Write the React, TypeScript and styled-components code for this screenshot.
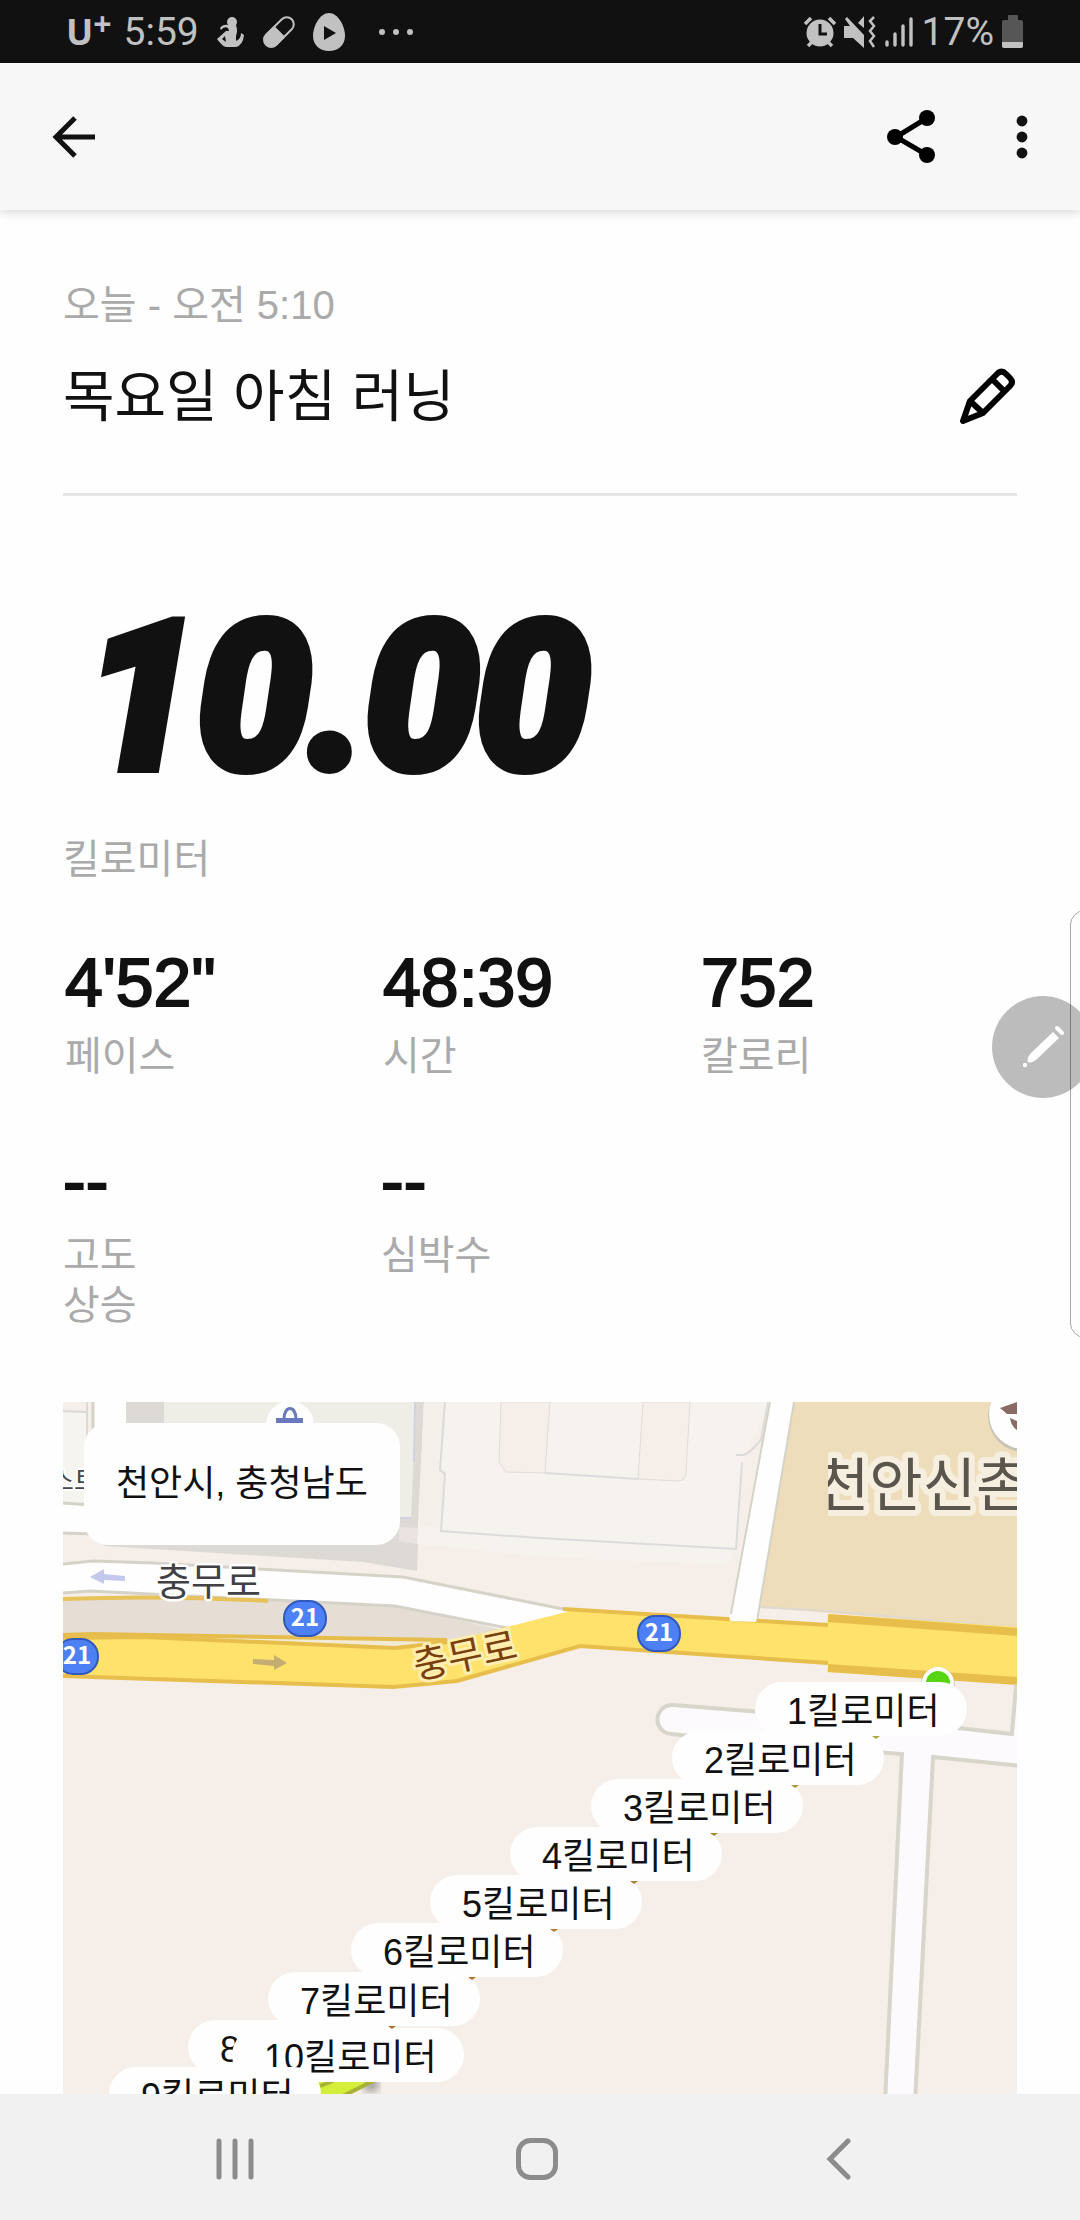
import React from "react";
import styled, { createGlobalStyle } from "styled-components";

const sans = `"Liberation Sans", "Noto Sans CJK KR", sans-serif`;
const korean = `"Noto Sans CJK KR", sans-serif`;
const ink = "#111111";
const muted = "#aaaaaa";

const GlobalStyle = createGlobalStyle`
  *, *::before, *::after { box-sizing: border-box; }
  body { margin: 0; background: #fefefe; color: ${ink}; font-family: ${sans}; }
  h1, p, dl, dt, dd { margin: 0; font-weight: 400; }
  button { margin: 0; padding: 0; border: 0; background: none; color: inherit; cursor: pointer; }
  svg { display: block; }
`;

const Screen = styled.div`
  position: relative;
  display: flex;
  flex-direction: column;
  height: 100vh;
  overflow: hidden;
`;

const StatusBar = styled.div`
  display: flex;
  flex: none;
  align-items: center;
  justify-content: space-between;
  height: 63px;
  padding: 0 56px 0 66px;
  background: #111111;
  color: #c1c1c1;
`;

const StatusGroup = styled.div<{ $gap: number }>`
  display: flex;
  align-items: center;
  gap: ${(p) => p.$gap}px;
`;

const StatusText = styled.span`
  font: 400 39px/64px Roboto, sans-serif;
`;

const Carrier = styled.span`
  display: flex;
  align-items: center;
  font: 700 36px/40px "Noto Sans", sans-serif;

  sup {
    align-self: flex-start;
    font-size: 32px;
    line-height: 24px;
  }
`;

const AppBar = styled.header`
  position: relative;
  z-index: 1;
  display: flex;
  flex: none;
  align-items: center;
  justify-content: space-between;
  height: 147px;
  padding: 0 32px 0 48px;
  background: #f7f7f7;
  box-shadow: 0 2px 10px rgba(0, 0, 0, 0.16);
`;

const AppActions = styled.div`
  display: flex;
  align-items: center;
  gap: 60px;
`;

const IconButton = styled.button`
  display: grid;
  place-items: center;
`;

const Content = styled.main`
  display: flex;
  flex: 1;
  flex-direction: column;
  min-height: 0;
  padding: 70px 63px 0;
`;

const RunDate = styled.p`
  color: ${muted};
  font-size: 40px;
  line-height: 50px;
`;

const TitleRow = styled.div`
  display: flex;
  align-items: center;
  justify-content: space-between;
  margin-top: 26px;
  padding-bottom: 55px;
  border-bottom: 3px solid #e5e5e5;
`;

const Title = styled.h1`
  font-size: 56px;
  line-height: 82px;
`;

const Distance = styled.p`
  margin-top: 102px;
  padding-left: 24px;
  font: italic 700 200px/200px Roboto, sans-serif;
  -webkit-text-stroke: 14px ${ink};
`;

const Label = styled.dt`
  color: ${muted};
  font-size: 40px;
  line-height: 50px;
`;

const DistanceLabel = styled(Label).attrs({ as: "p" })`
  margin-top: 36px;
`;

const Stats = styled.dl`
  display: grid;
  grid-template-columns: repeat(3, 1fr);
  row-gap: 60px;
  margin-top: 58px;
`;

const Stat = styled.div`
  display: flex;
  flex-direction: column-reverse;
  justify-content: flex-end;
  gap: 9px;

  &:nth-child(-n + 3) {
    padding-left: 2px;
  }
`;

const StatValue = styled.dd`
  font-size: 68px;
  line-height: 80px;
  -webkit-text-stroke: 2px ${ink};
`;

const MapView = styled.section`
  position: relative;
  flex: 1;
  min-height: 0;
  margin-top: 72px;
  overflow: hidden;
  background: #f6eee8;
`;

const MapLayer = styled.svg`
  position: absolute;
  top: 0;
  left: 0;
`;

const Place = styled.div`
  position: absolute;
  top: 21px;
  left: 21px;
  padding: 0 32px;
  border-radius: 24px;
  background: #fefefe;
  font-size: 36px;
  line-height: 122px;
  white-space: nowrap;
`;

const Pin = styled.div<{ $x: number; $y: number }>`
  position: absolute;
  top: ${(p) => p.$y}px;
  left: ${(p) => p.$x}px;
  padding: 6px 27px 0 32px;
  border-radius: 27px;
  background: #fefefe;
  font-size: 36px;
  line-height: 48px;
  white-space: nowrap;
`;

const EdgePanel = styled.div`
  position: absolute;
  top: 910px;
  right: -20px;
  width: 30px;
  height: 428px;
  border: 1px solid #a8a8a8;
  border-radius: 18px;
`;

const FloatingPen = styled.button`
  position: absolute;
  top: 996px;
  right: -14px;
  display: grid;
  place-items: center;
  width: 102px;
  height: 102px;
  border-radius: 50%;
  background: rgba(0, 0, 0, 0.26);
`;

const NavBar = styled.nav`
  display: grid;
  flex: none;
  grid-template-columns: repeat(3, 1fr);
  height: 126px;
  padding: 4px 90px 0 84px;
  background: #f1f1f1;
  color: #8c8c8c;
`;

const stats = [
  { value: `4'52"`, label: ["페이스"] },
  { value: "48:39", label: ["시간"] },
  { value: "752", label: ["칼로리"] },
  { value: "--", label: ["고도", "상승"] },
  { value: "--", label: ["심박수"] },
];

const pins = [
  { km: 1, x: 692, y: 280 },
  { km: 2, x: 609, y: 329 },
  { km: 3, x: 528, y: 377 },
  { km: 4, x: 447, y: 425 },
  { km: 5, x: 367, y: 473 },
  { km: 6, x: 288, y: 521 },
  { km: 7, x: 205, y: 570 },
  { km: 8, x: 125, y: 618 },
  { km: 10, x: 169, y: 626 },
  { km: 9, x: 46, y: 665 },
];

const tails = [
  [813, 334, "#a9a93c"],
  [732, 383, "#a39a35"],
  [651, 431, "#a38a35"],
  [571, 479, "#a88035"],
  [491, 527, "#b07a30"],
  [409, 575, "#b0702a"],
  [329, 624, "#b0702a"],
] as const;

function Shield({ x, y }: { x: number; y: number }) {
  return (
    <g>
      <rect x={x - 21} y={y - 17} width="42" height="35" rx="17" fill="#4e80f5" stroke="#3159bd" strokeWidth="2" />
      <text x={x} y={y + 8} fill="#fff" fontFamily={korean} fontWeight="700" fontSize="24" textAnchor="middle">21</text>
    </g>
  );
}

function StreetMap() {
  return (
    <MapLayer width="954" height="692" viewBox="0 0 954 692" role="img" aria-label="지도">
      <defs>
        <clipPath id="east-tile"><rect x="765" y="0" width="189" height="692" /></clipPath>
        <filter id="soft"><feGaussianBlur stdDeviation="4" /></filter>
      </defs>
      <path d="M0 9L24 10V102H0Z" fill="#f6f4ef" />
      <path d="M0 9L24 10M24 0V60" fill="none" stroke="#dcdad6" strokeWidth="2" />
      <path d="M63 0H361L354 169L300 160L41 144Z" fill="#dddad5" />
      <path d="M101 0H353L348 116L101 110Z" fill="#efeee6" />
      <path d="M348 116H337M352 0L351 60" stroke="#cfd2df" strokeWidth="2" />
      <path d="M336 125L354 126V142L336 139Z" fill="#ebe3e2" />
      <path d="M361 0H707L668 163L477 155L354 142Z" fill="#f6f3ee" />
      <path d="M361 0H382L377 68L382 72L378 128L356 122Z" fill="#f5efea" />
      <path d="M707 0L668 213L664 163L675 147L680 58Z" fill="#f6eee8" />
      <path d="M438 0L436 60L443 70L482 71L487 0ZM580 0L575 77L616 79Q623 78 623 71L627 0Z" fill="#f6eee8" stroke="#dfdcda" strokeWidth="1" />
      <path d="M382 0L377 68L382 72L378 129L477 136L673 147L679 60M482 71L575 77M673 53H680Q686 52 698 38L705 0" fill="none" stroke="#dcdbdc" strokeWidth="2" />
      <path d="M0 102L30 104V0H63V131H0Z" fill="#fefefe" />
      <path d="M0 101L28 103M30 0V104M0 131L60 133" fill="none" stroke="#d5d3c8" strokeWidth="3" />
      <path d="M731 0H954V227L695 205Z" fill="#eeddbb" />
      <path d="M696 205L765 209L954 226" fill="none" stroke="#dfd9d0" strokeWidth="2" />
      <path d="M707 0H731L693 225H666Z" fill="#fefefe" />
      <path d="M707 0L667 217M731 0L694 219" stroke="#d5d3c8" strokeWidth="2" />
      <path d="M0 197H220L332 204L450 226L400 242L0 240Z" fill="#e6ddd5" />
      <path d="M0 162L30 159L90 161L340 175L503 208L530 222L450 230L332 204L27 189L0 191Z" fill="#fefefe" />
      <path d="M0 162L30 159L90 161L340 175L505 208M444 226L332 204L27 189L0 191" fill="none" stroke="#d5d3c8" strokeWidth="3" />
      <path d="M0 197Q100 193 205 199" fill="none" stroke="#e7c15a" strokeWidth="4" />
      <path d="M0 233L30 232L384 238L332 246Z" fill="#f3ead6" />
      <path d="M0 233L30 232L384 238" fill="none" stroke="#e6bd4c" strokeWidth="4" />
      <path d="M0 236L80 235L332 246L385 240L511 208L765 223V261L517 244L394 279L330 285L0 274Z" fill="#ffe26c" />
      <path d="M0 236L80 235L332 246L385 240M500 207L765 223M765 261L517 244L394 279L330 285L0 274" fill="none" stroke="#e7be4b" strokeWidth="4" />
      <path d="M666 212L694 214L693 220L667 219Z" fill="#fefefe" />
      <path d="M765 212L954 225V282L765 270Z" fill="#ffe26c" />
      <path d="M765 216L954 230M765 266L954 279" stroke="#e7be4b" strokeWidth="8" />
      <path d="M27 175L41 167V172L62 174V179L41 178V182Z" fill="#c4c8ec" />
      <path d="M224 261L211 268V264L190 262V257L211 258V253Z" fill="#c4ad72" />
      <path d="M610 303L895 326L949 332L953 284H960V364L870 355L852 700H822L839 352L760 346L608 332A14.5 14.5 0 0 1 610 303Z" fill="#fdfafd" stroke="#d8d5ca" strokeWidth="4" />
      <circle cx="875" cy="282" r="17" fill="#b9b7a8" opacity=".6" />
      <circle cx="875" cy="281" r="16" fill="#fefefe" />
      <circle cx="875" cy="281" r="12" fill="#56d512" />
      <g paintOrder="stroke" strokeLinejoin="round" fontFamily={korean}>
        <text x="93" y="193" fontSize="38" fill="#414045" stroke="#fefefe" strokeWidth="5">충무로</text>
        <text x="402" y="267" fontSize="38" fill="#7a400c" stroke="#ffeeb0" strokeWidth="6" textAnchor="middle" transform="rotate(-12 402 253)">충무로</text>
        <text x="-13" y="88" fontSize="26" fill="#44474c" stroke="#fefefe" strokeWidth="4">스트</text>
        <text x="753" y="104" fontSize="58" fill="#5a564e" stroke="#f6efdf" strokeWidth="12" clipPath="url(#east-tile)">천안신촌</text>
      </g>
      <Shield x={242} y={216} />
      <Shield x={14} y={254} />
      <Shield x={596} y={231} />
      <circle cx="227" cy="23" r="24" fill="#fefefe" />
      <path d="M213 22V16H240V22Z" fill="#6a78bc" />
      <path d="M221 17C221 3 233 3 233 17" fill="none" stroke="#6a78bc" strokeWidth="3" />
      <circle cx="961" cy="14" r="36" fill="#c9c2b4" />
      <circle cx="961" cy="12" r="35" fill="#fefefe" />
      <path d="M937 6L954 0V12H944ZM947 16L954 19V28Q948 24 947 16Z" fill="#8a6a62" />
      <circle cx="308" cy="682" r="8" fill="#777" opacity=".7" filter="url(#soft)" />
      <path d="M250 680L306 678L283 692H250Z" fill="#d4ee3a" />
      <path d="M257 684L270 679M280 694L310 679" stroke="#a8b236" strokeWidth="4" />
    </MapLayer>
  );
}

export default function App() {
  return (
    <Screen>
      <GlobalStyle />
      <StatusBar>
        <StatusGroup $gap={18}>
          <StatusGroup $gap={12}>
            <Carrier>U<sup>+</sup></Carrier>
            <StatusText>5:59</StatusText>
          </StatusGroup>
          <svg width="28" height="32" viewBox="0 0 28 32" fill="currentColor">
            <circle cx="15" cy="6" r="5" />
            <path d="M11 9H19Q21 15 19 20V25Q24 23 24 17L27 19Q26 29 19 31H9Q5 30 0 23L9 15H12L11 12Q7 10 4 14L3 12Q6 8 11 9ZM8 20L5 23L9 26Z" fillRule="evenodd" />
          </svg>
          <svg width="32" height="34" viewBox="0 0 32 34">
            <g transform="rotate(45 16 17)">
              <rect x="9" y="-1" width="14" height="36" rx="7" fill="none" stroke="currentColor" strokeWidth="2" />
              <path d="M8 16H24V28A8 8 0 0 1 8 28Z" fill="currentColor" />
            </g>
          </svg>
          <svg width="32" height="38" viewBox="0 0 32 38">
            <path d="M16 0C25 0 32 13 32 23C32 32 25 38 16 38S0 32 0 23C0 13 7 0 16 0Z" fill="currentColor" />
            <path d="M11 13L23 20L11 27Z" fill="#111" />
          </svg>
          <svg width="62" height="6" viewBox="0 0 62 6" fill="currentColor">
            <circle cx="19" cy="3" r="3" /><circle cx="33" cy="3" r="3" /><circle cx="47" cy="3" r="3" />
          </svg>
        </StatusGroup>
        <StatusGroup $gap={8}>
          <svg width="32" height="32" viewBox="0 0 32 32">
            <circle cx="16" cy="17" r="13.5" fill="currentColor" />
            <path d="M1 8L7 2M31 8L25 2M4 30L9 25M28 30L23 25" stroke="currentColor" strokeWidth="3.5" />
            <path d="M16 8V18H23" fill="none" stroke="#111" strokeWidth="3" />
          </svg>
          <svg width="32" height="32" viewBox="0 0 32 32" fill="currentColor">
            <path d="M0 10H6L1 3L3 1L20 19V32L9 22H0ZM20 0V12L14 7Z" />
            <path d="M30 1L26 5L30 10L26 15L30 20L26 25L30 31" fill="none" stroke="currentColor" strokeWidth="2.5" />
          </svg>
          <svg width="30" height="32" viewBox="0 0 30 32" fill="none" stroke="currentColor" strokeWidth="3.4" strokeLinecap="round">
            <path d="M3 26V29M11 18V29M19 10V29M27 3V29" />
          </svg>
          <StatusText>17%</StatusText>
          <svg width="22" height="34" viewBox="0 0 22 34">
            <path d="M6 1Q6 0 7 0H15Q16 0 16 1V5H19Q21 5 21 7V31Q21 33 19 33H2Q0 33 0 31V7Q0 5 2 5H6Z" fill="#565656" />
            <path d="M0 27H21V31Q21 33 19 33H2Q0 33 0 31Z" fill="currentColor" />
          </svg>
        </StatusGroup>
      </StatusBar>

      <AppBar>
        <IconButton aria-label="뒤로">
          <svg width="52" height="52" viewBox="0 0 52 52" fill="none" stroke={ink} strokeWidth="5">
            <path d="M27 7L8 26L27 45M8 26H47" />
          </svg>
        </IconButton>
        <AppActions>
          <IconButton aria-label="공유">
            <svg width="50" height="56" viewBox="0 0 50 56" fill="#000">
              <path d="M41 9L10 28L41 46" fill="none" stroke="#000" strokeWidth="5" />
              <circle cx="41" cy="9" r="8" /><circle cx="9" cy="28" r="8" /><circle cx="41" cy="46" r="8" />
            </svg>
          </IconButton>
          <IconButton aria-label="더보기">
            <svg width="52" height="52" viewBox="0 0 52 52" fill={ink}>
              <circle cx="26" cy="10" r="5.4" /><circle cx="26" cy="26" r="5.4" /><circle cx="26" cy="42" r="5.4" />
            </svg>
          </IconButton>
        </AppActions>
      </AppBar>

      <Content>
        <RunDate>오늘 - 오전 5:10</RunDate>
        <TitleRow>
          <Title>목요일 아침 러닝</Title>
          <IconButton aria-label="이름 편집">
            <svg width="60" height="60" viewBox="0 0 60 60" fill="none" stroke="#000" strokeWidth="6" strokeLinejoin="round">
              <path d="M6 54L13 34L41 6Q45 3 49 7L53 11Q57 15 53 19L26 46ZM13 34L26 46M35 12L48 25" />
            </svg>
          </IconButton>
        </TitleRow>

        <Distance>10.00</Distance>
        <DistanceLabel>킬로미터</DistanceLabel>

        <Stats>
          {stats.map((s) => (
            <Stat key={s.label[0]}>
              <Label>
                {s.label.map((line, i) => (
                  <React.Fragment key={line}>{i > 0 && <br />}{line}</React.Fragment>
                ))}
              </Label>
              <StatValue>{s.value}</StatValue>
            </Stat>
          ))}
        </Stats>

        <MapView>
          <StreetMap />
          <Place>천안시, 충청남도</Place>
          {pins.map((p) => (
            <Pin key={p.km} $x={p.x} $y={p.y}>{p.km}킬로미터</Pin>
          ))}
          <MapLayer width="954" height="692" viewBox="0 0 954 692" aria-hidden="true">
            {tails.map(([x, y, c]) => (
              <path key={x} d={`M${x - 4} ${y}H${x + 4}L${x} ${y + 3}Z`} fill={c} />
            ))}
          </MapLayer>
        </MapView>
      </Content>

      <NavBar>
        <IconButton aria-label="최근 앱">
          <svg width="42" height="42" viewBox="0 0 42 42" stroke="currentColor" strokeWidth="5" strokeLinecap="round">
            <path d="M5 3V39M21 3V39M37 3V39" />
          </svg>
        </IconButton>
        <IconButton aria-label="홈">
          <svg width="42" height="42" viewBox="0 0 42 42" fill="none" stroke="currentColor" strokeWidth="5">
            <rect x="2.5" y="2.5" width="37" height="37" rx="12" />
          </svg>
        </IconButton>
        <IconButton aria-label="뒤로 가기">
          <svg width="42" height="42" viewBox="0 0 42 42" fill="none" stroke="currentColor" strokeWidth="5" strokeLinecap="round">
            <path d="M30 3L12 21L30 39" />
          </svg>
        </IconButton>
      </NavBar>

      <EdgePanel />
      <FloatingPen aria-label="펜">
        <svg width="44" height="44" viewBox="0 0 44 44" fill="#fefefe">
          <circle cx="4" cy="40" r="2.2" />
          <path d="M7 37Q5 34 10 28L32 7L38 13L16 34Q10 39 7 37Z" />
          <path d="M36 3L41 8" stroke="#fefefe" strokeWidth="4" strokeLinecap="round" />
        </svg>
      </FloatingPen>
    </Screen>
  );
}
